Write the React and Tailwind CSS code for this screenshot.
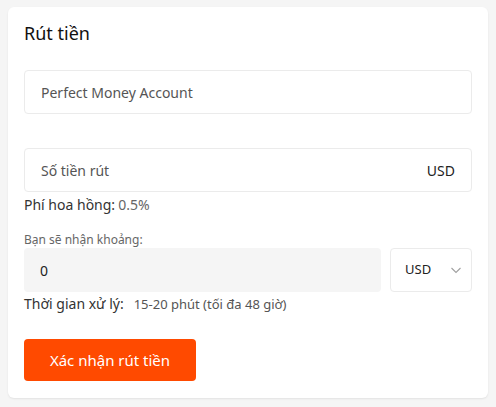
import React from "react";

export default function App() {
  return (
    <div className="w-[496px] h-[407px] bg-[#f5f5f5] pt-[7px] pl-[8px]" style={{ fontFamily: '"Noto Sans", "Open Sans", sans-serif' }}>
      <div className="w-[480px] h-[391px] bg-white rounded-[6px] shadow-[0_1px_2px_rgba(0,0,0,0.08)] px-4 pt-[14px]">
        <div className="text-[18px] leading-[24px] text-[#111]">Rút tiền</div>
        <div className="mt-[25px] h-[44px] border border-[#ebebeb] rounded-[4px] flex items-center px-4 text-[14px] text-[#555]">
          Perfect Money Account
        </div>
        <div className="mt-[34px] h-[44px] border border-[#ebebeb] rounded-[4px] flex items-center justify-between px-4 text-[14px]">
          <span className="text-[#555]">Số tiền rút</span>
          <span className="text-[#222]">USD</span>
        </div>
        <div className="mt-[3px] h-[20px] flex items-center text-[14px] leading-[20px]">
          <span className="text-[#333]">Phí hoa hồng:</span>
          <span className="ml-[3px] text-[14px] text-[#666]">0.5%</span>
        </div>
        <div className="mt-[17px] h-[16px] text-[12px] leading-[16px] text-[#666]">Bạn sẽ nhận khoảng:</div>
        <div className="flex gap-[9px] h-[44px]">
          <div className="flex-1 bg-[#f5f5f5] rounded-[4px] flex items-center px-4 text-[14px] text-[#222]">0</div>
          <div className="w-[82px] border border-[#ebebeb] rounded-[4px] flex items-center justify-between pl-[14px] pr-[9px] text-[13px] text-[#222]">
            <span>USD</span>
            <svg width="12" height="8" viewBox="0 0 12 8" fill="none">
              <path d="M1.5 2l4.5 4.5L10.5 2" stroke="#a0a0a0" strokeWidth="1.1" />
            </svg>
          </div>
        </div>
        <div className="mt-[2px] h-[20px] flex items-center text-[14px] leading-[20px]">
          <span className="text-[#333]">Thời gian xử lý:</span>
          <span className="ml-[10px] text-[13px] text-[#555]">15-20 phút (tối đa 48 giờ)</span>
        </div>
        <button className="mt-[25px] w-[172px] h-[42px] bg-[#ff4a00] rounded-[4px] text-white text-[15px] flex items-center justify-center">
          Xác nhận rút tiền
        </button>
      </div>
    </div>
  );
}
